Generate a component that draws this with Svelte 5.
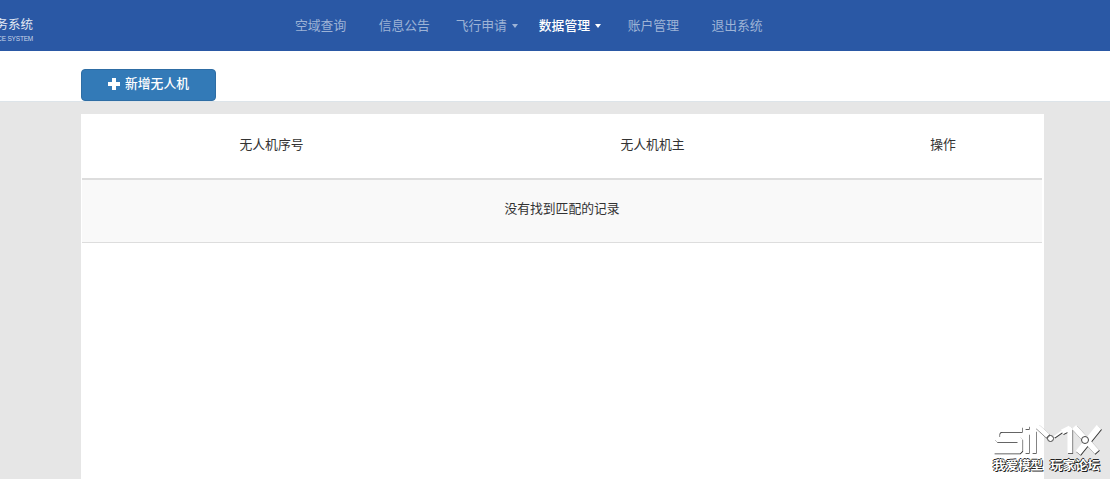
<script>
  const links = [
    { label: '空域查询' },
    { label: '信息公告' },
    { label: '飞行申请', caret: true, shift: true },
    { label: '数据管理', caret: true, active: true },
    { label: '账户管理' },
    { label: '退出系统' }
  ];
  const columns = [
    { label: '无人机序号', width: 379 },
    { label: '无人机机主', width: 383 },
    { label: '操作', width: 198 }
  ];
  // watermark logo strokes, in page coordinates
  const logoPaths = [
    { d: 'M1022 429.5H1002Q997 429.5 997 434V439.5H1020V451H994', w: 5 },
    { d: 'M1027 434V453M1034 431V453', w: 4 },
    { d: 'M1027 426V429', w: 4 },
    { d: 'M1037 426L1048 436', w: 5 },
    { d: 'M1054 437L1064 430', w: 2 },
    { d: 'M1062 432L1070 428V453', w: 5 },
    { d: 'M1074 427L1097 452', w: 6 },
    { d: 'M1099 427L1078 453', w: 6 }
  ];
</script>

<div class="page">
  <header class="navbar">
    <div class="brand">
      <div class="brand-name">务系统</div>
      <div class="brand-sub">CE SYSTEM</div>
    </div>
    <nav class="nav">
      {#each links as link}
        <span class="nav-link" class:active={link.active} class:has-caret={link.caret} class:shift={link.shift}>
          {link.label}{#if link.caret}<i class="caret"></i>{/if}
        </span>
      {/each}
    </nav>
  </header>

  <div class="toolbar">
    <button class="btn-add">
      <svg class="plus" viewBox="0 0 12 12" width="12" height="12"><path d="M4 0h4v4h4v4H8v4H4V8H0V4h4z" fill="#fff" /></svg>
      <span>新增无人机</span>
    </button>
  </div>

  <main class="panel">
    <table>
      <thead>
        <tr>
          {#each columns as col}
            <th style="width: {col.width}px">{col.label}</th>
          {/each}
        </tr>
      </thead>
      <tbody>
        <tr><td colspan="3">没有找到匹配的记录</td></tr>
      </tbody>
    </table>
  </main>

  <div class="watermark">
    <svg viewBox="990 422 115 37" width="115" height="37">
      <g fill="none" stroke-linejoin="bevel">
        {#each logoPaths as p}
          <path d={p.d} stroke="#333" stroke-width={p.w} transform="translate(0.6 0.8)" />
        {/each}
        {#each logoPaths as p}
          <path d={p.d} stroke="#fff" stroke-width={p.w} />
        {/each}
        <circle cx="1050.5" cy="438.5" r="3" stroke="#444" stroke-width="1" fill="#fff" />
        <circle cx="1085" cy="440" r="3.5" stroke="#444" stroke-width="1" fill="#fff" />
      </g>
    </svg>
    <div class="wm-text"><span>我爱模型</span><span>玩家论坛</span></div>
  </div>
</div>

<style>
  :global(body) {
    margin: 0;
    background: #e6e6e6;
    font-family: "Liberation Sans", "Noto Sans CJK SC", sans-serif;
    font-size: 12.8px;
    color: #333;
  }
  .page {
    position: relative;
    height: 479px;
    overflow: hidden;
  }
  .navbar {
    height: 51px;
    background: #2a58a5;
    display: flex;
    align-items: center;
  }
  .brand {
    width: 278.75px;
    flex: none;
    color: #e4eaf4;
    padding-top: 9px;
  }
  .brand-name,
  .brand-sub {
    width: 33px;
    display: flex;
    justify-content: flex-end;
    white-space: nowrap;
  }
  .brand-name {
    font-size: 12.5px;
    line-height: 16px;
  }
  .brand-sub {
    font-size: 6.5px;
    letter-spacing: -0.2px;
    line-height: 10px;
    margin-top: 1px;
    color: #c9d5e9;
  }
  .nav {
    display: flex;
  }
  .nav-link {
    color: #9db3d6;
    line-height: 18px;
    white-space: nowrap;
    padding: 0 16.25px;
    display: flex;
    align-items: center;
  }
  .nav-link.has-caret {
    padding: 0 10.5px;
  }
  .nav-link.shift {
    margin-left: -1px;
  }
  .nav-link.active {
    color: #fff;
    font-weight: 500;
  }
  .caret {
    margin: 1px 0 0 5px;
    border-top: 4px solid currentColor;
    border-left: 3.75px solid transparent;
    border-right: 3.75px solid transparent;
  }
  .toolbar {
    height: 51px;
    background: #fff;
    border-bottom: 1px solid #dde4e9;
    padding-left: 81px;
    padding-top: 18px;
    box-sizing: border-box;
  }
  .btn-add {
    width: 135px;
    height: 32px;
    background: #337ab7;
    border: 1px solid #2e6da4;
    border-radius: 4px;
    color: #fff;
    font: inherit;
    font-weight: 500;
    display: flex;
    align-items: center;
    justify-content: center;
    gap: 5px;
    padding: 0 0 2px;
  }
  .btn-add span {
    margin-bottom: 4px;
  }
  .panel {
    width: 963px;
    height: 365px;
    margin: 12px 0 0 81px;
    background: #fff;
    padding-left: 1px;
    box-sizing: border-box;
  }
  table {
    width: 960px;
    border-collapse: collapse;
    table-layout: fixed;
  }
  th {
    height: 65px;
    font-weight: normal;
    text-align: center;
    border-bottom: 2px solid #ddd;
    padding: 0 0 5px;
    box-sizing: border-box;
  }
  td {
    height: 63px;
    text-align: center;
    background: #f9f9f9;
    border-bottom: 1px solid #ddd;
    padding: 0 0 6px;
    box-sizing: border-box;
  }
  .watermark {
    position: absolute;
    left: 990px;
    top: 422px;
    width: 115px;
    color: #fff;
  }
  .watermark svg {
    display: block;
  }
  .wm-text {
    display: flex;
    justify-content: space-between;
    padding: 0 5px 0 3px;
    font-size: 12.5px;
    line-height: 14px;
    font-weight: bold;
    text-shadow: 1px 1px 0 #222, -1px 0 0 #222, 0 -1px 0 #222;
  }
</style>
